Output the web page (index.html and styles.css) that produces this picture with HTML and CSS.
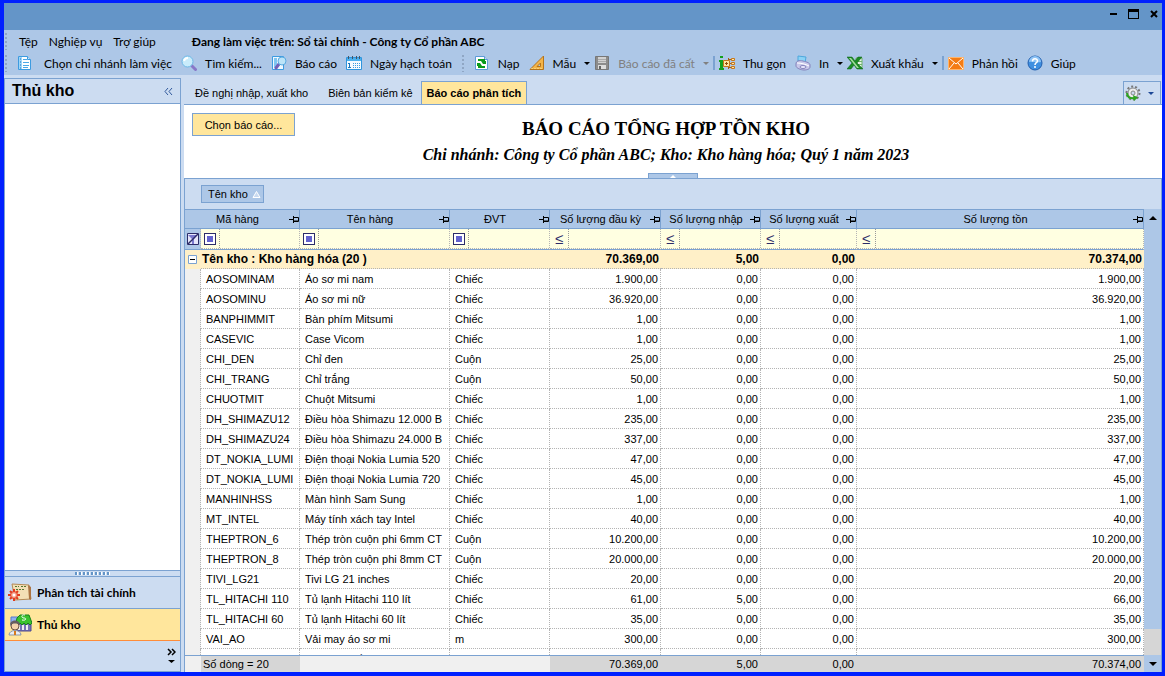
FILE: index.html
```html
<!DOCTYPE html>
<html lang="vi">
<head>
    <meta charset="UTF-8">
    <meta name="viewport" content="width=device-width, initial-scale=1.0">
    <title>Báo cáo tổng hợp tồn kho</title>
    <link rel="stylesheet" href="styles.css">
</head>
<body>
    <div class="window">
        <header class="title-bar">
            <button class="window-btn" aria-label="Thu nhỏ"><svg width="12" height="12"><path d="M2 5h7v2H2z"/></svg></button>
            <button class="window-btn" aria-label="Phóng to"><svg width="12" height="12"><path d="M0 1h11v10H0zM1 4v6h9V4z" fill-rule="evenodd"/></svg></button>
            <button class="window-btn" aria-label="Đóng"><svg width="12" height="12"><path d="M3 3l6 6M9 3l-6 6" stroke="#000" stroke-width="2"/></svg></button>
        </header>

        <div class="commands">
            <nav class="menu-bar">
                <span class="grip"></span>
                <a href="#" class="menu-link">Tệp</a>
                <a href="#" class="menu-link">Nghiệp vụ</a>
                <a href="#" class="menu-link">Trợ giúp</a>
                <span class="working-on">Đang làm việc trên: Sổ tài chính - Công ty Cổ phần ABC</span>
            </nav>
            <div class="toolbar">
                <span class="grip"></span>
                <button class="tool tool-first">
                    <svg class="icon" viewBox="0 0 16 16"><path d="M1.500 1.500h9l3 3v10h-12z" fill="#fff" stroke="#3d9be0"/><path d="M2 2h3v12H2z" fill="#9ed5f7"/><path d="M3 4h1M3 7h1M3 10h1M3 13h1" stroke="#1c77bd"/><path d="M6 4.500h4M6 7.500h6M6 10.500h6M6 12.500h5" stroke="#4ba9e6"/><path d="M10.500 1.500v3h3" fill="#c8e7fa" stroke="#3d9be0"/></svg>
                    Chọn chi nhánh làm việc
                </button>
                <button class="tool">
                    <svg class="icon" viewBox="0 0 16 16"><path d="M10.500 10.500l4 4" stroke="#8878c8" stroke-width="3" stroke-linecap="round"/><circle cx="6.500" cy="6.500" r="5.500" fill="#c9ecfb" stroke="#6db8e6"/><path d="M3 6a4 4 0 0 1 4-3" stroke="#fff" stroke-width="2" fill="none"/></svg>
                    Tìm kiếm...
                </button>
                <button class="tool">
                    <svg class="icon" viewBox="0 0 16 16"><path d="M1.500 1.500h11v13h-11z" fill="#eef8ff" stroke="#3d9be0"/><path d="M3 3h3v10H3z" fill="#7fc6f1"/><path d="M8 9l-3 4" stroke="#7260b8" stroke-width="3" stroke-linecap="round"/><circle cx="11" cy="6" r="4" fill="#bce4f8" stroke="#5aaae0"/></svg>
                    Báo cáo
                </button>
                <button class="tool">
                    <svg class="icon" viewBox="0 0 16 16"><path d="M.5 2.500h15v12H.5z" fill="#f4fbff" stroke="#2f95dd"/><path d="M1 3h14v3H1z" fill="#4bb0ec"/><path d="M2.500 1v3M6.500 1v3M10.500 1v3M13.500 1v3" stroke="#456"/><path d="M3.500 8v4M2 8.500h1M2 12.500h3" stroke="#1c77bd"/><path d="M7 8.500h7M7 10.500h7M7 12.500h7" stroke="#3a9be0" stroke-dasharray="1 1"/></svg>
                    Ngày hạch toán
                </button>
                <span class="grip grip-mid"></span>
                <button class="tool">
                    <svg class="icon" viewBox="0 0 16 16"><path d="M1.500 1.500h9l3 3v10h-12z" fill="#fff" stroke="#5b9bd8"/><path d="M10.500 1.500v3h3" fill="#cde" stroke="#5b9bd8"/><path d="M4 5h6v2M11 12H5v-2" stroke="#0a9a1c" stroke-width="2" fill="none"/><path d="M7 6h5v3H9zM3 8h3l2 3H3z" fill="#0a9a1c"/></svg>
                    Nạp
                </button>
                <button class="tool tool-menu">
                    <svg class="icon" viewBox="0 0 16 16"><path d="M14.500 1v13.500H1zM11.500 8v3.500H8z" fill="#f3b449" stroke="#b5741b" fill-rule="evenodd"/><path d="M3 14v-1M6 14v-1M9 14v-1M12 14v-1" stroke="#fff0a8"/></svg>
                    Mẫu<span class="caret"></span>
                </button>
                <button class="tool tool-menu" disabled>
                    <svg class="icon" viewBox="0 0 16 16"><path d="M1.500 1.500h13v13h-13z" fill="#8c8c8c" stroke="#777"/><path d="M4 2h8v6H4z" fill="#d2d2d2"/><path d="M4 4.500h8M4 6.500h8" stroke="#aaa"/><path d="M4 10h8v4H4z" fill="#ddd"/><path d="M5 11h2v3H5z" fill="#666"/></svg>
                    Báo cáo đã cất<span class="caret"></span>
                </button>
                <span class="separator"></span>
                <button class="tool">
                    <svg class="icon" viewBox="0 0 16 16"><path d="M1 1h3v2H1zM0 5h4v8h1v2H0v-2h1V7H0z" fill="#14a01c"/><path d="M10 4.500h2M10 8.500h2M10 12.500h2M9.500 3v11" stroke="#a65e12"/><path d="M4.500 5.500h6v6h-6z" fill="#ffe7a4" stroke="#c5761c"/><path d="M7.500 7v3M6 8.500h3" stroke="#8e4d0a"/><path d="M12.500 3.500h3v2h-3zM12.500 7.500h3v2h-3zM12.500 11.500h3v2h-3z" fill="#ffe7a4" stroke="#c5761c"/></svg>
                    Thu gọn
                </button>
                <button class="tool tool-menu">
                    <svg class="icon" viewBox="0 0 16 16"><path d="M3 1l8 1-1 6-7-2z" fill="#8bd2f5" stroke="#4da7dd"/><path d="M1 9c0-3 3-4 7-3s7 2 7 4v2c0 2-3 3-6 3s-8-2-8-4z" fill="#c9c8ea" stroke="#8583bb"/><path d="M2 8c4 0 8 1 12 3" stroke="#fff" fill="none"/><ellipse cx="8" cy="12" rx="3" ry="1.500" fill="#eceaff" stroke="#8583bb"/></svg>
                    In<span class="caret"></span>
                </button>
                <button class="tool tool-menu">
                    <svg class="icon" viewBox="0 0 16 16"><path d="M9 3h6v10H9z" fill="#e5f4e4" stroke="#6fb36c"/><path d="M9 6.500h6M9 9.500h6" stroke="#6fb36c"/><path d="M0 2h5l3 4 3-4h4l-5 6 6 6h-6l-3-4-3 4H0l5-6z" fill="#1a8c25" stroke="#0b5c14" stroke-width=".5"/><path d="M2 3h2l8 10h-2z" fill="#a5dca0"/></svg>
                    Xuất khẩu<span class="caret"></span>
                </button>
                <span class="separator"></span>
                <button class="tool">
                    <svg class="icon" viewBox="0 0 16 16"><path d="M.5 2.500h15v12H.5z" fill="#f47c14" stroke="#ffb56a"/><path d="M1 3l7 6 7-6M1 14l5-6M15 14l-5-6" stroke="#fff" fill="none"/></svg>
                    Phản hồi
                </button>
                <button class="tool">
                    <svg class="icon" viewBox="0 0 16 16"><circle cx="8" cy="8" r="7" fill="#3f8fe0" stroke="#235fae"/><path d="M2 7a6 6 0 0 1 12 0c-4 1-8-1-12 0" fill="#8fc4f6"/><path d="M5.500 6.500c0-3.500 5-3.500 5-.5 0 2-2.500 1.500-2.500 4M8 11v2" stroke="#fff" stroke-width="1.500" fill="none"/></svg>
                    Giúp
                </button>
            </div>
        </div>

        <div class="workspace">
            <aside class="sidebar">
                <div class="sidebar-header">
                    <h2>Thủ kho</h2>
                    <button class="collapse-btn" aria-label="Thu gọn thanh bên"><svg width="9" height="9"><path d="M4 1L1 4.500 4 8M8 1L5 4.500 8 8" fill="none" stroke="#31599c"/></svg></button>
                </div>
                <div class="sidebar-body"></div>
                <div class="splitter"><span class="splitter-dots"></span></div>
                <a href="#" class="sidebar-item">
                    <svg class="sidebar-icon" viewBox="0 0 24 24"><path d="M4 3l17 1 2 14-16 1z" fill="#f3dfb6" stroke="#b58a55"/><path d="M20 4l3 2v13l-2-1z" fill="#ab7444"/><path d="M7 5.500h4M13 5.500h5M8 8.500h9" stroke="#573" stroke-dasharray="2 1"/><path d="M6 8v12M0 14h12M2 10l8 8M10 10l-8 8" stroke="#e23a1c" stroke-width="2"/><circle cx="6" cy="14" r="3.500" fill="#f6a08a" stroke="#e23a1c"/><circle cx="6" cy="14" r="1.500" fill="#fff"/></svg>
                    Phân tích tài chính
                </a>
                <a href="#" class="sidebar-item active">
                    <svg class="sidebar-icon" viewBox="0 0 24 24"><path d="M3 4h7v9H3z" fill="#8fb0f0" stroke="#5578cc"/><path d="M9 8h14v10H9z" fill="#7773b5" stroke="#4d4992"/><path d="M11 12v5M15 12v5M19 12v5" stroke="#eee" stroke-width="2"/><path d="M9 5l3-3h9l3 8-2 2-2-2-2 2-2-2-2 2-2-2-2 2-2-2z" fill="#3bc22f" stroke="#17811a"/><path d="M17 2c-4-1-4 3-1 3s2 3-2 2" fill="none" stroke="#fff"/><circle cx="7" cy="13" r="4" fill="#f4d3ad" stroke="#6c5244"/><path d="M2 12c0-6 10-6 10 0-3-2-7-2-10 0z" fill="#665d60"/><path d="M1 22c0-6 12-6 12 0z" fill="#e8edf3" stroke="#8a97a8"/><path d="M7 18v4" stroke="#d77a1c" stroke-width="2"/></svg>
                    Thủ kho
                </a>
                <div class="sidebar-footer">
                    <button class="more-btn" aria-label="Thêm"><svg width="9" height="16"><path d="M1 1l3 3-3 3M5 1l3 3-3 3" fill="none" stroke="#000" stroke-width="1.500"/><path d="M1 12h7l-3.500 3z"/></svg></button>
                </div>
            </aside>

            <main class="main">
                <div class="tab-bar">
                    <button class="tab">Đề nghị nhập, xuất kho</button>
                    <button class="tab">Biên bản kiểm kê</button>
                    <button class="tab active">Báo cáo phân tích</button>
                    <button class="settings-btn" aria-label="Tùy chọn">
                        <svg class="icon" viewBox="0 0 16 16"><circle cx="8" cy="8" r="6.500" fill="none" stroke="#777" stroke-width="2" stroke-dasharray="2 2"/><circle cx="8" cy="8" r="5" fill="#eee" stroke="#888"/><circle cx="8" cy="8" r="2" fill="#ccdcf1" stroke="#888"/><path d="M2 8c0 4 3 6 7 5" fill="none" stroke="#2da51f" stroke-width="2"/><path d="M8 10l5 2.500L9 16z" fill="#2da51f"/></svg>
                        <span class="caret"></span>
                    </button>
                </div>

                <section class="report-head">
                    <button class="report-btn">Chọn báo cáo...</button>
                    <div class="report-titles">
                        <h1>BÁO CÁO TỔNG HỢP TỒN KHO</h1>
                        <p>Chi nhánh: Công ty Cổ phần ABC; Kho: Kho hàng hóa; Quý 1 năm 2023</p>
                    </div>
                    <button class="fold-btn" aria-label="Ẩn tiêu đề"><svg width="6" height="3"><path d="M0 3l3-3 3 3z" fill="#fff"/></svg></button>
                </section>

                <section class="grid-panel">
                    <div class="group-band">
                        <button class="group-chip">Tên kho <svg width="9" height="9"><path d="M1 7.500h7L4.500 1.500z" fill="#c9daf0" stroke="#fff"/></svg></button>
                    </div>

                    <div class="grid-area">
                        <div class="grid-content">
                            <div class="grid-scroll">
                                <table class="grid">
                                    <colgroup><col class="col-mark"><col class="col-code"><col class="col-name"><col class="col-unit"><col class="col-open"><col class="col-in"><col class="col-out"><col></colgroup>
                                    <thead>
                                        <tr>
                                            <th colspan="2"><div class="head"><span>Mã hàng</span><svg class="pin" viewBox="0 0 10 9"><path d="M0 4.500h4M4.500 1v7M5 2.500h4.500v4H5M5 6h4" fill="none" stroke="#000"/></svg></div></th>
                                            <th><div class="head"><span>Tên hàng</span><svg class="pin" viewBox="0 0 10 9"><path d="M0 4.500h4M4.500 1v7M5 2.500h4.500v4H5M5 6h4" fill="none" stroke="#000"/></svg></div></th>
                                            <th><div class="head"><span>ĐVT</span><svg class="pin" viewBox="0 0 10 9"><path d="M0 4.500h4M4.500 1v7M5 2.500h4.500v4H5M5 6h4" fill="none" stroke="#000"/></svg></div></th>
                                            <th><div class="head"><span>Số lượng đầu kỳ</span><svg class="pin" viewBox="0 0 10 9"><path d="M0 4.500h4M4.500 1v7M5 2.500h4.500v4H5M5 6h4" fill="none" stroke="#000"/></svg></div></th>
                                            <th><div class="head"><span>Số lượng nhập</span><svg class="pin" viewBox="0 0 10 9"><path d="M0 4.500h4M4.500 1v7M5 2.500h4.500v4H5M5 6h4" fill="none" stroke="#000"/></svg></div></th>
                                            <th><div class="head"><span>Số lượng xuất</span><svg class="pin" viewBox="0 0 10 9"><path d="M0 4.500h4M4.500 1v7M5 2.500h4.500v4H5M5 6h4" fill="none" stroke="#000"/></svg></div></th>
                                            <th><div class="head"><span>Số lượng tồn</span><svg class="pin" viewBox="0 0 10 9"><path d="M0 4.500h4M4.500 1v7M5 2.500h4.500v4H5M5 6h4" fill="none" stroke="#000"/></svg></div></th>
                                        </tr>
                                        <tr class="filter-row">
                                            <td class="filter-mark"><button class="clear-filter" aria-label="Xóa bộ lọc"><svg width="12" height="12" viewBox="0 0 12 12"><path d="M.5.5h11v11H.5z" fill="#e6e6fa" stroke="#2c2c68"/><path d="M1 2h9L7 6v5H5V6z" fill="#7b79cf"/><path d="M1 11L11 1" stroke="#2c2c68" stroke-width="1.500"/></svg></button></td>
                                            <td><div class="filter"><button class="op" aria-label="Chứa"><span class="op-box"></span></button><input type="text" aria-label="Lọc mã hàng"></div></td>
                                            <td><div class="filter"><button class="op" aria-label="Chứa"><span class="op-box"></span></button><input type="text" aria-label="Lọc tên hàng"></div></td>
                                            <td><div class="filter"><button class="op" aria-label="Chứa"><span class="op-box"></span></button><input type="text" aria-label="Lọc ĐVT"></div></td>
                                            <td><div class="filter"><button class="op">≤</button><input type="text" aria-label="Lọc số lượng đầu kỳ"></div></td>
                                            <td><div class="filter"><button class="op">≤</button><input type="text" aria-label="Lọc số lượng nhập"></div></td>
                                            <td><div class="filter"><button class="op">≤</button><input type="text" aria-label="Lọc số lượng xuất"></div></td>
                                            <td><div class="filter"><button class="op">≤</button><input type="text" aria-label="Lọc số lượng tồn"></div></td>
                                        </tr>
                                    </thead>
                                    <tbody>
                                        <tr class="group-row"><td><button class="expander" aria-label="Thu gọn nhóm"><svg width="9" height="9"><path d="M.5.5h8v8h-8z" fill="#fff" stroke="#7ba2d1"/><path d="M2 4.500h5" stroke="#000"/></svg></button></td><td colspan="3">Tên kho : Kho hàng hóa (20 )</td><td>70.369,00</td><td>5,00</td><td>0,00</td><td>70.374,00</td></tr>
                                        <tr><td></td><td>AOSOMINAM</td><td>Áo sơ mi nam</td><td>Chiếc</td><td>1.900,00</td><td>0,00</td><td>0,00</td><td>1.900,00</td></tr>
                                        <tr><td></td><td>AOSOMINU</td><td>Áo sơ mi nữ</td><td>Chiếc</td><td>36.920,00</td><td>0,00</td><td>0,00</td><td>36.920,00</td></tr>
                                        <tr><td></td><td>BANPHIMMIT</td><td>Bàn phím Mitsumi</td><td>Chiếc</td><td>1,00</td><td>0,00</td><td>0,00</td><td>1,00</td></tr>
                                        <tr><td></td><td>CASEVIC</td><td>Case Vicom</td><td>Chiếc</td><td>1,00</td><td>0,00</td><td>0,00</td><td>1,00</td></tr>
                                        <tr><td></td><td>CHI_DEN</td><td>Chỉ đen</td><td>Cuộn</td><td>25,00</td><td>0,00</td><td>0,00</td><td>25,00</td></tr>
                                        <tr><td></td><td>CHI_TRANG</td><td>Chỉ trắng</td><td>Cuộn</td><td>50,00</td><td>0,00</td><td>0,00</td><td>50,00</td></tr>
                                        <tr><td></td><td>CHUOTMIT</td><td>Chuột Mitsumi</td><td>Chiếc</td><td>1,00</td><td>0,00</td><td>0,00</td><td>1,00</td></tr>
                                        <tr><td></td><td>DH_SHIMAZU12</td><td>Điều hòa Shimazu 12.000 B</td><td>Chiếc</td><td>235,00</td><td>0,00</td><td>0,00</td><td>235,00</td></tr>
                                        <tr><td></td><td>DH_SHIMAZU24</td><td>Điều hòa Shimazu 24.000 B</td><td>Chiếc</td><td>337,00</td><td>0,00</td><td>0,00</td><td>337,00</td></tr>
                                        <tr><td></td><td>DT_NOKIA_LUMI</td><td>Điện thoại Nokia Lumia 520</td><td>Chiếc</td><td>47,00</td><td>0,00</td><td>0,00</td><td>47,00</td></tr>
                                        <tr><td></td><td>DT_NOKIA_LUMI</td><td>Điện thoại Nokia Lumia 720</td><td>Chiếc</td><td>45,00</td><td>0,00</td><td>0,00</td><td>45,00</td></tr>
                                        <tr><td></td><td>MANHINHSS</td><td>Màn hình Sam Sung</td><td>Chiếc</td><td>1,00</td><td>0,00</td><td>0,00</td><td>1,00</td></tr>
                                        <tr><td></td><td>MT_INTEL</td><td>Máy tính xách tay Intel</td><td>Chiếc</td><td>40,00</td><td>0,00</td><td>0,00</td><td>40,00</td></tr>
                                        <tr><td></td><td>THEPTRON_6</td><td>Thép tròn cuộn phi 6mm CT</td><td>Cuộn</td><td>10.200,00</td><td>0,00</td><td>0,00</td><td>10.200,00</td></tr>
                                        <tr><td></td><td>THEPTRON_8</td><td>Thép tròn cuộn phi 8mm CT</td><td>Cuộn</td><td>20.000,00</td><td>0,00</td><td>0,00</td><td>20.000,00</td></tr>
                                        <tr><td></td><td>TIVI_LG21</td><td>Tivi LG 21 inches</td><td>Chiếc</td><td>20,00</td><td>0,00</td><td>0,00</td><td>20,00</td></tr>
                                        <tr><td></td><td>TL_HITACHI 110</td><td>Tủ lạnh Hitachi 110 lít</td><td>Chiếc</td><td>61,00</td><td>5,00</td><td>0,00</td><td>66,00</td></tr>
                                        <tr><td></td><td>TL_HITACHI 60</td><td>Tủ lạnh Hitachi 60 lít</td><td>Chiếc</td><td>35,00</td><td>0,00</td><td>0,00</td><td>35,00</td></tr>
                                        <tr><td></td><td>VAI_AO</td><td>Vải may áo sơ mi</td><td>m</td><td>300,00</td><td>0,00</td><td>0,00</td><td>300,00</td></tr>
                                        <tr><td></td><td>VAI_KAKI</td><td>Vải may quần kaki</td><td>m</td><td>150,00</td><td>0,00</td><td>0,00</td><td>150,00</td></tr>
                                    </tbody>
                                </table>
                            </div>
                            <table class="grid summary">
                                <colgroup><col class="col-mark"><col class="col-code"><col class="col-name"><col class="col-unit"><col class="col-open"><col class="col-in"><col class="col-out"><col></colgroup>
                                <tbody>
                                    <tr><td></td><td>Số dòng = 20</td><td></td><td></td><td>70.369,00</td><td>5,00</td><td>0,00</td><td>70.374,00</td></tr>
                                </tbody>
                            </table>
                        </div>
                        <div class="scrollbar">
                            <button class="scroll-btn" aria-label="Cuộn lên"><svg width="8" height="4"><path d="M0 4l4-4 4 4z"/></svg></button>
                            <div class="scroll-track"><div class="scroll-thumb"></div></div>
                            <button class="scroll-btn" aria-label="Cuộn xuống"><svg width="8" height="4"><path d="M0 0h8L4 4z"/></svg></button>
                        </div>
                    </div>
                </section>
            </main>
        </div>
    </div>
</body>
</html>
```
FILE: styles.css
```css
* {
    box-sizing: border-box;
}

body {
    margin: 0;
    font-family: "Liberation Sans", Arial, sans-serif;
    font-size: 11px;
    color: #000;
}

button {
    padding: 0;
    border: none;
    background: none;
    font: inherit;
    color: inherit;
    cursor: pointer;
}

a {
    color: inherit;
    text-decoration: none;
}

svg {
    display: block;
    flex: none;
}

.window {
    display: flex;
    flex-direction: column;
    height: 100vh;
    border: solid #0020ff;
    border-width: 3px 3px 4px 4px;
    background-color: #ccdcf1;
}

/* Title bar */
.title-bar {
    display: flex;
    justify-content: flex-end;
    gap: 8px;
    height: 27px;
    padding: 5px 2px 0 0;
    background-color: #6495c8;
}

.window-btn {
    height: 12px;
}

/* Menu and toolbar */
.commands {
    height: 45px;
    background-color: #adc7e7;
    font-family: "Lato", "Open Sans", sans-serif;
    font-size: 12px;
    white-space: nowrap;
}

.menu-bar,
.toolbar {
    display: flex;
    align-items: center;
    height: 22px;
}

.grip {
    width: 4px;
    height: 18px;
    background-image: radial-gradient(#8fa6c4 1px, transparent 1px);
    background-size: 4px 4px;
}

.menu-link {
    margin-left: 11px;
}

.working-on {
    margin-left: 36px;
    font-weight: bold;
}

.tool {
    display: flex;
    align-items: center;
    gap: 8px;
    margin-left: 9px;
}

.tool-first {
    gap: 11px;
}

.tool-menu + .tool {
    margin-left: 4px;
}

.tool:disabled {
    color: #808080;
}

.icon {
    width: 16px;
    height: 16px;
}

.caret {
    border: 3px solid transparent;
    border-top-color: currentColor;
    border-bottom: none;
}

.grip-mid {
    margin-left: 9px;
}

.separator {
    width: 2px;
    height: 14px;
    margin-left: 4px;
    background-color: #7ba2d1;
}

.separator + .tool {
    margin-left: 4px;
}

/* Sidebar */
.workspace {
    display: flex;
    flex: 1;
    gap: 3px;
    min-height: 0;
}

.sidebar {
    display: flex;
    flex-direction: column;
    width: 177px;
    margin-top: 3px;
    border: 1px solid #7ba2d1;
}

.sidebar-header {
    display: flex;
    align-items: center;
    justify-content: space-between;
    height: 25px;
    padding: 0 7px;
    border-bottom: 1px solid #7ba2d1;
}

.sidebar-header h2 {
    margin: 0;
    font-size: 16px;
}

.sidebar-body {
    flex: 1;
    background-color: #fff;
}

.splitter {
    display: flex;
    align-items: center;
    justify-content: center;
    height: 7px;
    border: solid #7ba2d1;
    border-width: 1px 0;
}

.splitter-dots {
    width: 36px;
    height: 3px;
    background-image: linear-gradient(to right, #6495c8 2px, #fff 2px, #fff 3px, transparent 3px);
    background-size: 4px 3px;
}

.sidebar-item {
    display: flex;
    align-items: center;
    gap: 5px;
    height: 32px;
    padding-left: 3px;
    border-bottom: 1px solid #7ba2d1;
    font-family: "Lato", "Open Sans", sans-serif;
    font-size: 12px;
    font-weight: bold;
}

.sidebar-item.active {
    background-color: #ffe69c;
    border-bottom-color: #ff8c3a;
}

.sidebar-icon {
    width: 24px;
    height: 24px;
}

.sidebar-footer {
    display: flex;
    align-items: center;
    justify-content: flex-end;
    height: 30px;
    padding-right: 4px;
}

/* Tabs */
.main {
    display: flex;
    flex: 1;
    flex-direction: column;
    min-width: 0;
}

.tab-bar {
    display: flex;
    align-items: flex-end;
    height: 30px;
    padding: 0 1px 0 5px;
    border-bottom: 1px solid #7ba2d1;
}

.tab {
    height: 23px;
    padding: 0 5px;
    border: solid transparent;
    border-width: 1px 1px 0;
    white-space: nowrap;
}

.tab + .tab {
    margin-left: 8px;
}

.tab + .tab.active {
    margin-left: 2px;
    background-color: #ffe69c;
    border-color: #7ba2d1;
    font-weight: bold;
}

.settings-btn {
    display: flex;
    align-items: center;
    gap: 7px;
    height: 23px;
    margin-left: auto;
    padding: 0 6px 0 1px;
    border: 1px solid #7ba2d1;
    border-bottom: none;
    color: #1c4796;
}

/* Report heading */
.report-head {
    display: grid;
    position: relative;
    height: 73px;
    padding: 8px;
    background-color: #fff;
}

.report-btn {
    grid-area: 1 / 1;
    justify-self: start;
    align-self: start;
    width: 103px;
    height: 23px;
    background-color: #ffe69c;
    border: 1px solid #7ba2d1;
}

.report-titles {
    grid-area: 1 / 1;
    justify-self: center;
    padding: 4px 14px 0 0;
    font-family: "Liberation Serif", "Times New Roman", serif;
    font-weight: bold;
    text-align: center;
}

.report-titles h1 {
    margin: 0;
    font-size: 19px;
    line-height: 24px;
}

.report-titles p {
    margin: 0;
    font-size: 16px;
    font-style: italic;
    line-height: 28px;
}

.fold-btn {
    display: flex;
    align-items: center;
    justify-content: center;
    position: absolute;
    bottom: 0;
    left: 50%;
    width: 50px;
    height: 5px;
    margin-left: -25px;
    background-color: #adc7e7;
    border: 1px solid #7ba2d1;
    border-bottom: none;
}

/* Grid */
.grid-panel {
    display: flex;
    flex: 1;
    flex-direction: column;
    min-height: 0;
    border: solid #7ba2d1;
    border-width: 1px 1px 0;
}

.group-band {
    height: 30px;
    padding: 6px 16px;
}

.group-chip {
    display: flex;
    align-items: center;
    gap: 4px;
    height: 18px;
    padding: 0 2px 0 6px;
    background-color: #adc7e7;
    border: 1px solid #7ba2d1;
}

.grid-area {
    display: flex;
    flex: 1;
    min-height: 0;
}

.grid-content {
    display: flex;
    flex: 1;
    flex-direction: column;
    min-width: 0;
    background-color: #fff;
}

.grid-scroll {
    flex: 1;
    min-height: 0;
    overflow: hidden;
}

.grid {
    width: 100%;
    table-layout: fixed;
    border-collapse: separate;
    border-spacing: 0;
}

.col-mark { width: 16px; }
.col-code { width: 99px; }
.col-name { width: 150px; }
.col-unit { width: 100px; }
.col-open { width: 111px; }
.col-in { width: 100px; }
.col-out { width: 96px; }

.grid th {
    height: 20px;
    padding: 0;
    background-color: #adc7e7;
    border: solid #7ba2d1;
    border-width: 1px 1px 1px 0;
    font-weight: normal;
}

.head {
    display: flex;
    align-items: center;
    height: 18px;
    white-space: nowrap;
}

.head span {
    flex: 1;
    padding-left: 1px;
}

.pin {
    width: 10px;
    height: 9px;
}

.grid td {
    height: 20px;
    padding: 0 2px 0 5px;
    border-right: 1px dotted #b4b4b4;
    border-bottom: 1px dotted #b4b4b4;
    line-height: 16px;
    white-space: nowrap;
    overflow: hidden;
}

.grid td:nth-last-child(-n+4) {
    text-align: right;
}

.grid tbody td:first-child {
    background-color: #f0f0f0;
    border-bottom: none;
}

.grid .filter-row td {
    height: 21px;
    padding: 0;
    background-color: #ffffe1;
    border-bottom: 1px solid #7ba2d1;
}

.grid .filter-row .filter-mark {
    background-color: #adc7e7;
}

.clear-filter {
    display: block;
    margin-left: 2px;
}

.filter {
    display: flex;
    height: 20px;
    border-bottom: 1px dotted #b4b4b4;
}

.op {
    display: flex;
    align-items: center;
    justify-content: center;
    width: 19px;
    border-right: 1px dotted #999;
    color: #2c2c68;
    font-size: 15px;
}

.op-box {
    width: 12px;
    height: 12px;
    background-color: #6363ce;
    border: 1px solid #2c2c68;
    box-shadow: inset 0 0 0 2px #fff;
}

.filter input {
    flex: 1;
    min-width: 0;
    padding: 0 2px;
    border: none;
    background: none;
    font: inherit;
}

.grid .group-row td {
    height: 19px;
    padding: 0 2px 0 1px;
    background-color: #fff0c8;
    border-right: none;
    font-size: 12px;
    font-weight: bold;
}

.grid .group-row td:first-child {
    padding-left: 3px;
    background-color: #fff0c8;
}

.expander {
    display: block;
}

.summary {
    border-top: 1px solid #7ba2d1;
}

.grid.summary td {
    height: 16px;
    padding: 0 3px 0 2px;
    background-color: #d6d6d6;
    border: none;
}

.grid.summary td:nth-child(1),
.grid.summary td:nth-child(3),
.grid.summary td:nth-child(4) {
    background-color: #f0f0f0;
}

/* Vertical scrollbar */
.scrollbar {
    display: flex;
    flex-direction: column;
    width: 17px;
    background-color: #adc7e7;
}

.scroll-btn {
    display: flex;
    align-items: center;
    justify-content: center;
    height: 17px;
}

.scroll-track {
    display: flex;
    flex: 1;
    background-color: #d6d6d6;
}

.scroll-thumb {
    width: 100%;
    height: 94%;
    background-color: #adc7e7;
}
```
